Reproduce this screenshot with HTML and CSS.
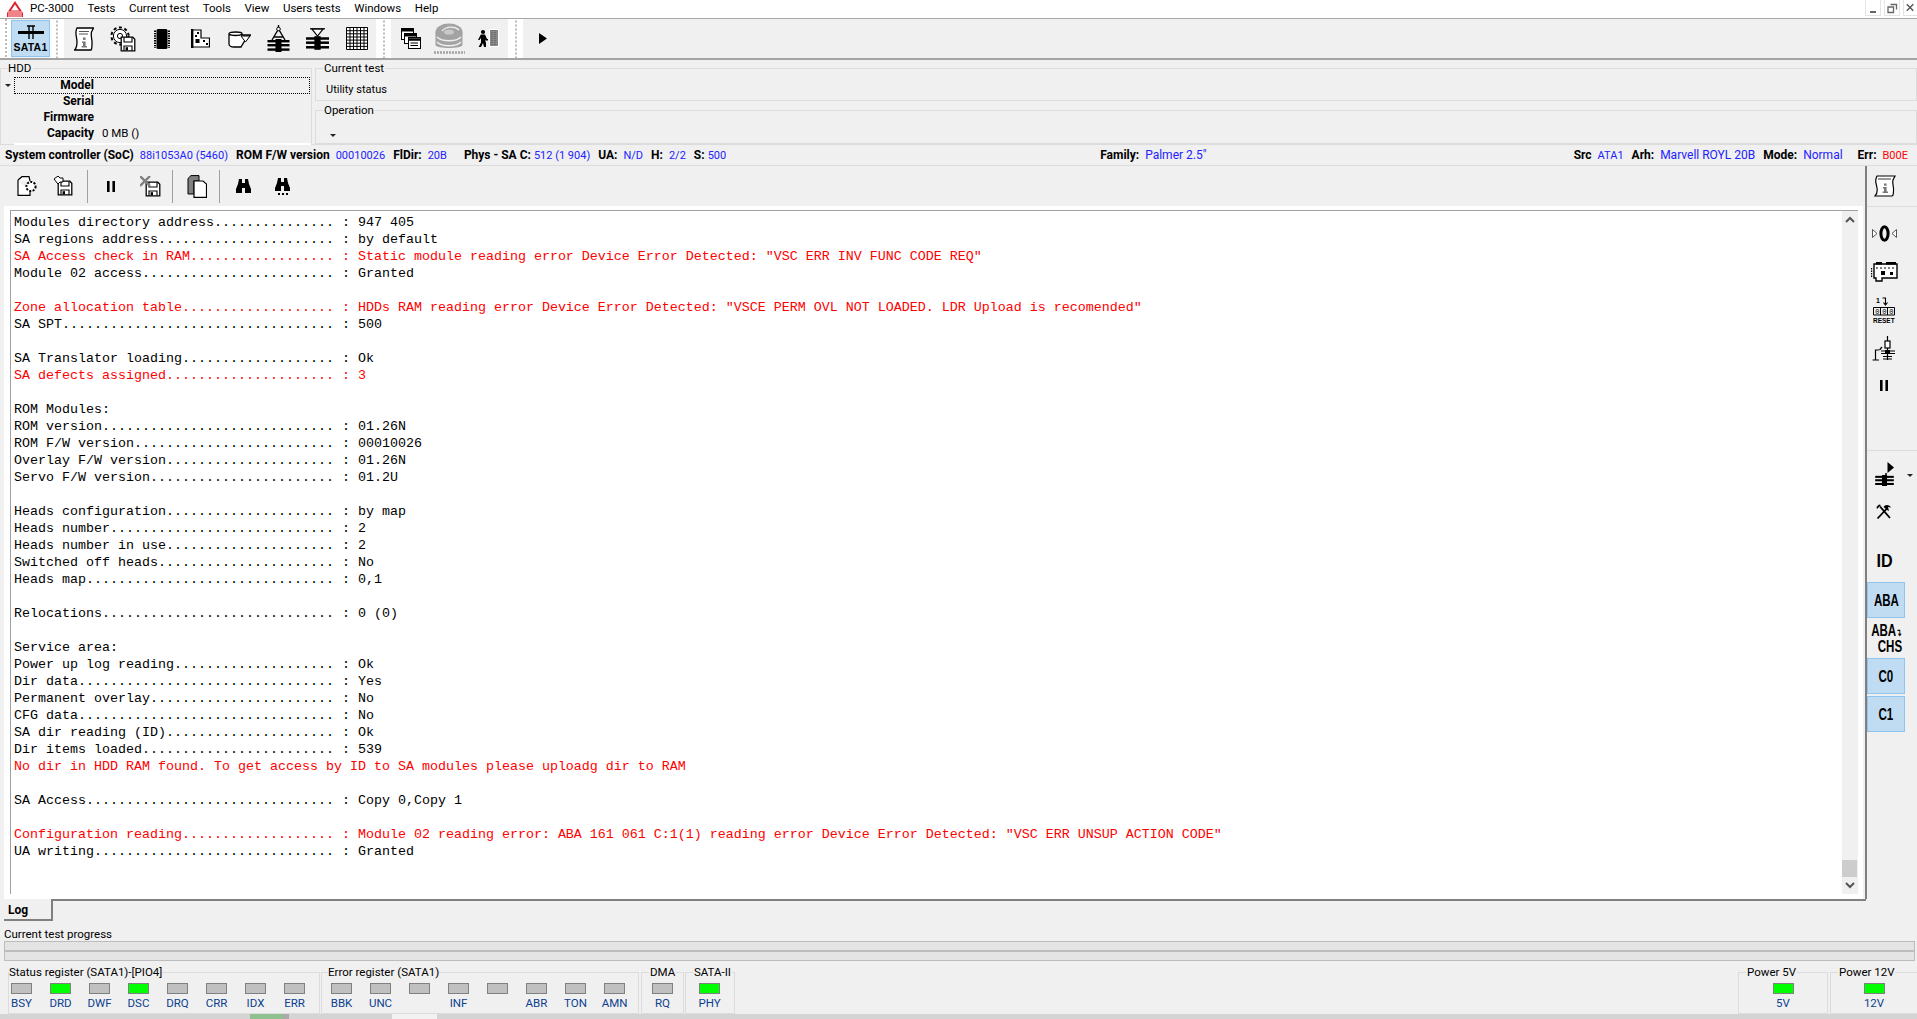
FILE: index.html
```html
<!DOCTYPE html>
<html lang="en">
<head>
<meta charset="utf-8">
<title>PC-3000</title>
<link rel="stylesheet" href="styles.css">
</head>
<body>
<svg class="defs" width="0" height="0" aria-hidden="true"><defs>
<symbol id="floppy" viewBox="0 0 20 20"><path d="M1.500 1.500H16L18.500 4V18.500H1.500Z" fill="#fff" stroke="#000" stroke-width="1.600"/><path d="M5 1.500V7.500H15V1.500M5 18.500V12.500H15V18.500" fill="none" stroke="#000" stroke-width="1.400"/><rect x="7" y="14" width="3" height="4" fill="#000"/></symbol>
<symbol id="bars" viewBox="0 0 22 13"><g fill="#000"><rect x="0" y="1" width="22" height="2.400"/><rect x="0" y="5" width="22" height="2.400"/><rect x="0" y="9.400" width="22" height="2.400"/><rect x="8" y="0" width="6" height="13"/></g></symbol>
</defs></svg>

<header class="menubar">
  <svg class="logo" viewBox="0 0 16 16"><path d="M8 0L16 12V16H0V12Z" fill="#e0202a"/><path d="M8 3.500L12 9.500H4Z" fill="#fff"/><path d="M1 11H15M1 13H15M1 15H15" stroke="#fff" stroke-width=".9"/></svg>
  <span>PC-3000</span><span>Tests</span><span>Current test</span><span>Tools</span><span>View</span><span>Users tests</span><span>Windows</span><span>Help</span>
  <div class="winctl">
    <div class="winbtn"><svg width="14" height="14" viewBox="0 0 14 14"><rect x="4" y="10" width="6" height="2" fill="#666"/></svg></div>
    <div class="winbtn"><svg width="14" height="14" viewBox="0 0 14 14"><path d="M5.500 3.500H11.500V8.500M3 6H8.500V11.500H3Z" fill="none" stroke="#666" stroke-width="1.300"/></svg></div>
    <div class="winbtn closebtn"><svg width="14" height="14" viewBox="0 0 14 14"><path d="M3 3L10 10M10 3L3 10" stroke="#555" stroke-width="1.500"/></svg></div>
  </div>
</header>

<nav class="toolbar">
  <div class="grip grip-first"></div>
  <div class="slot slot-active">
    <svg width="28" height="15" viewBox="0 0 28 15"><path d="M1 7.500H27" stroke="#000" stroke-width="3"/><path d="M12 1V14M16 1V14M10 1H18" stroke="#000" stroke-width="1.400" fill="none"/></svg>
    <span class="satalabel">SATA1</span>
  </div>
  <div class="grip"></div>
  <div class="tbgroup">
    <div class="slot"><svg width="20" height="24" viewBox="0 0 20 24"><path d="M3 1H19.500L17.500 5C16.500 9 18.500 13 18 17C17.700 19 18.500 21 17 23H.6C2.500 21 3 18 3 15C3 11 1.500 8 2 4.500C2.200 3 2.500 2 3 1Z" fill="#fff" stroke="#000" stroke-width="1.300"/><path d="M5 4.500H15M5 7H14" stroke="#555"/><rect x="9" y="10.500" width="2.600" height="2.400" fill="#777"/><path d="M8 14.500H11.600V19H13V20.500H7.600V19H9V16H8Z" fill="#777"/></svg></div>
    <div class="slot"><svg width="26" height="26" viewBox="0 0 26 26"><circle cx="10" cy="10" r="8.600" fill="none" stroke="#000" stroke-width="2" stroke-dasharray="3 2.600"/><circle cx="10" cy="10" r="6.600" fill="#fff" stroke="#000" stroke-width="1"/><circle cx="10" cy="10" r="2.600" fill="none" stroke="#000"/><use href="#floppy" x="10" y="10" width="16" height="16"/></svg></div>
    <div class="slot"><svg width="16" height="20" viewBox="0 0 16 20"><rect x="2.500" y="0" width="11" height="20" rx="1.500" fill="#000"/><path d="M1 1.500V19M15 1.500V19" stroke="#000" stroke-width="2" stroke-dasharray="1.400 1" fill="none"/></svg></div>
    <div class="slot"><svg width="19" height="19" viewBox="0 0 19 19"><path d="M1 1H10V9H18.500V18H1Z" fill="#fff" stroke="#000" stroke-width="1.200"/><rect x="0" y="0" width="2.400" height="19" fill="#000"/><rect x="4.500" y="10" width="4" height="4" fill="#000"/><rect x="6" y="3" width="2" height="2" fill="#000"/><rect x="12" y="11" width="2" height="2" fill="#000"/><rect x="15" y="14" width="2" height="2" fill="#000"/><rect x="4" y="6" width="2" height="2" fill="#000"/></svg></div>
    <div class="slot"><svg width="23" height="18" viewBox="0 0 23 18"><path d="M1 3.500C1 1.500 14 1.500 14 3.500V5H22.500L16 12L13 17H6C3 17 1 16 1 14ZM1 4C3 6 12 6 14 4" fill="#fff" stroke="#000" stroke-width="1.300"/><path d="M13 6H22L17.500 12Z" fill="#fff" stroke="#000"/></svg></div>
    <div class="slot"><svg width="23" height="27" viewBox="0 0 23 27"><path d="M11.500 0V5M11.500 4L5 15M11.500 4L18 15M7 12H16" stroke="#000" stroke-width="1.400" fill="none"/><circle cx="11.500" cy="4" r="1.800" fill="#fff" stroke="#000"/><use href="#bars" x="0" y="14" width="23" height="13"/></svg></div>
    <div class="slot"><svg width="23" height="22" viewBox="0 0 23 22"><path d="M6 1H17L11.500 8Z" fill="#fff" stroke="#000" stroke-width="1.200"/><path d="M4 .8H19" stroke="#000" stroke-width="1.200"/><use href="#bars" x="0" y="8" width="23" height="14"/></svg></div>
    <div class="slot"><svg width="22" height="23" viewBox="0 0 22 23"><path d="M.5 .5H21.500V22.500H.5ZM4 1V22M7.500 1V22M11 1V22M14.500 1V22M18 1V22M1 3.700H21M1 6.800H21M1 10H21M1 13.100H21M1 16.200H21M1 19.400H21" fill="#fff" stroke="#000"/></svg></div>
  </div>
  <div class="grip"></div>
  <div class="tbgroup">
    <div class="slot"><svg width="20" height="21" viewBox="0 0 20 21"><g stroke="#000" fill="#fff"><rect x=".5" y=".5" width="12" height="11"/><rect x="3.500" y="5.500" width="12" height="10"/><rect x="7.500" y="9.500" width="12" height="11"/></g><path d="M1 2.200H12M4 7.200H15M8 11.500H19" stroke="#000" stroke-width="2.400"/><path d="M9.500 15H17M9.500 17.500H17" stroke="#000"/></svg></div>
    <div class="slot"><svg width="31" height="31" viewBox="0 0 31 31"><ellipse cx="15" cy="9" rx="13.500" ry="8.500" fill="#a3a3a3"/><path d="M1.500 9V22C1.500 26 28.500 26 28.500 22V9" fill="#a3a3a3"/><path d="M3 14C8 19 22 19 27 14M3 19C8 24 22 24 27 19M8 8C12 3 21 3 25 7" stroke="#eee" stroke-width="1.400" fill="none"/><ellipse cx="15" cy="9" rx="5" ry="2.600" fill="#c8c8c8"/><path d="M0 29.500H31" stroke="#a3a3a3" stroke-width="2.500" stroke-dasharray="2 1"/></svg></div>
    <div class="slot"><svg width="21" height="19" viewBox="0 0 21 19"><rect x="11" y="0" width="10" height="18" fill="#fff"/><rect x="12" y="1" width="8" height="16" fill="#888"/><path d="M14 1V17M17 1V17" stroke="#555" stroke-dasharray="1 1"/><circle cx="5" cy="3" r="2.100" fill="#000"/><path d="M3 5.500H7L9 10H10V11.500H7.500L6.800 10L8 14V18H6L5 14L3 18H0.600L3 13.500V9L1.500 11H0L2.500 6Z" fill="#000"/></svg></div>
  </div>
  <div class="grip"></div>
  <div class="slot"><svg width="8" height="11" viewBox="0 0 8 11"><path d="M0 0L8 5.500L0 11Z" fill="#000"/></svg></div>
</nav>

<section class="devicearea">
  <div class="group hddgroup">
    <span class="legend">HDD</span>
    <div class="hddrow hddrow-focus"><span class="droptri droptri-model"></span><b class="hddlabel">Model</b></div>
    <div class="hddrow"><b class="hddlabel">Serial</b></div>
    <div class="hddrow"><b class="hddlabel">Firmware</b></div>
    <div class="hddrow"><b class="hddlabel">Capacity</b><span class="hddvalue">0 MB ()</span></div>
    <div class="hddwhite"></div>
  </div>
  <div class="testcol">
    <div class="group testgroup">
      <span class="legend legend-test">Current test</span>
      <div class="utility">Utility status</div>
    </div>
    <div class="group opgroup">
      <span class="legend legend-test">Operation</span>
      <span class="droptri droptri-op"></span>
    </div>
  </div>
</section>

<section class="inforow">
  <b>System controller (SoC)</b><span class="val">88i1053A0 (5460)</span>
  <b class="next">ROM F/W version</b><span class="val">00010026</span>
  <b class="next">FlDir:</b><span class="val">20B</span>
  <b class="next-wide">Phys - SA C:</b><span class="val val-tight">512 (1 904)</span>
  <b class="next">UA:</b><span class="val">N/D</span>
  <b class="next">H:</b><span class="val">2/2</span>
  <b class="next">S:</b><span class="val val-tight">500</span>
  <b class="family">Family:</b><span class="val val-wide">Palmer 2.5"</span>
  <b class="src">Src</b><span class="val">ATA1</span>
  <b class="next">Arh:</b><span class="val val-wide">Marvell ROYL 20B</span>
  <b class="next">Mode:</b><span class="val val-wide">Normal</span>
  <b class="next-err">Err:</b><span class="val val-err">B00E</span>
</section>

<main class="workspace">
  <div class="center">
    <div class="toolbar2">
      <svg class="ml0" width="20" height="20" viewBox="0 0 20 20"><path d="M1 4L5 .7H12L13 5M1 4V19.300H13V16" fill="#fff" stroke="#000" stroke-width="1.200"/><circle cx="14" cy="10.500" r="4.600" fill="#fff" stroke="#000" stroke-width="2" stroke-dasharray="2 1.400"/></svg>
      <svg class="ml16" width="20" height="20" viewBox="0 0 20 20"><use href="#floppy" x="4" y="4" width="16" height="16"/><path d="M1 3L5 0L7 2H10V6H7L5 8Z" fill="#fff" stroke="#000"/></svg>
      <i class="sep ml14"></i>
      <svg class="ml19" width="8" height="11" viewBox="0 0 8 11"><path d="M0 0H2.600V11H0ZM5.400 0H8V11H5.400Z" fill="#000"/></svg>
      <svg class="ml25" width="21" height="21" viewBox="0 0 21 21"><use href="#floppy" x="5" y="5" width="16" height="16"/><path d="M0 0L10 10M10 0L0 10" stroke="#808080" stroke-width="2.400"/></svg>
      <i class="sep ml11"></i>
      <svg class="ml14" width="20" height="23" viewBox="0 0 20 23"><path d="M1 3.500L4 .6H12V6H7V19H1Z" fill="#808080" stroke="#000"/><path d="M7 6H16L19.500 9V22.400H7Z" fill="#fff" stroke="#000" stroke-width="1.200"/></svg>
      <i class="sep ml12"></i>
      <svg class="ml16" width="15" height="14" viewBox="0 0 15 14"><path d="M3 0H6V4H9V0H12L13 5L15 10V14H9V9H6V14H0V10L2 5Z" fill="#000"/></svg>
      <svg class="ml24" width="15" height="17" viewBox="0 0 15 17"><path d="M3 0H6V4H9V0H12L13 5L15 10V13H9V8H6V13H0V10L2 5Z" fill="#000"/><path d="M3 16H5M7 16H9M11 16H13" stroke="#000" stroke-width="2"/></svg>
    </div>
    <div class="logouter">
      <div class="logbox">
        <div class="logtext">
<div class="line">Modules directory address............... : 947 405</div>
<div class="line">SA regions address...................... : by default</div>
<div class="line err">SA Access check in RAM.................. : Static module reading error Device Error Detected: "VSC ERR INV FUNC CODE REQ"</div>
<div class="line">Module 02 access........................ : Granted</div>
<div class="line"> </div>
<div class="line err">Zone allocation table................... : HDDs RAM reading error Device Error Detected: "VSCE PERM OVL NOT LOADED. LDR Upload is recomended"</div>
<div class="line">SA SPT.................................. : 500</div>
<div class="line"> </div>
<div class="line">SA Translator loading................... : Ok</div>
<div class="line err">SA defects assigned..................... : 3</div>
<div class="line"> </div>
<div class="line">ROM Modules:</div>
<div class="line">ROM version............................. : 01.26N</div>
<div class="line">ROM F/W version......................... : 00010026</div>
<div class="line">Overlay F/W version..................... : 01.26N</div>
<div class="line">Servo F/W version....................... : 01.2U</div>
<div class="line"> </div>
<div class="line">Heads configuration..................... : by map</div>
<div class="line">Heads number............................ : 2</div>
<div class="line">Heads number in use..................... : 2</div>
<div class="line">Switched off heads...................... : No</div>
<div class="line">Heads map............................... : 0,1</div>
<div class="line"> </div>
<div class="line">Relocations............................. : 0 (0)</div>
<div class="line"> </div>
<div class="line">Service area:</div>
<div class="line">Power up log reading.................... : Ok</div>
<div class="line">Dir data................................ : Yes</div>
<div class="line">Permanent overlay....................... : No</div>
<div class="line">CFG data................................ : No</div>
<div class="line">SA dir reading (ID)..................... : Ok</div>
<div class="line">Dir items loaded........................ : 539</div>
<div class="line err">No dir in HDD RAM found. To get access by ID to SA modules please uploadg dir to RAM</div>
<div class="line"> </div>
<div class="line">SA Access............................... : Copy 0,Copy 1</div>
<div class="line"> </div>
<div class="line err">Configuration reading................... : Module 02 reading error: ABA 161 061 C:1(1) reading error Device Error Detected: "VSC ERR UNSUP ACTION CODE"</div>
<div class="line">UA writing.............................. : Granted</div>
        </div>
        <div class="scrollbar">
          <svg class="scrollarrow" width="16" height="18" viewBox="0 0 16 18"><path d="M4 11L8 7L12 11" fill="none" stroke="#555" stroke-width="2"/></svg>
          <div class="thumb"></div>
          <svg class="scrollarrow" width="16" height="17" viewBox="0 0 16 17"><path d="M4 6L8 10L12 6" fill="none" stroke="#555" stroke-width="2"/></svg>
        </div>
      </div>
    </div>
  </div>
  <aside class="sidebar">
    <div class="sideslot sideslot-top"><svg width="22" height="22" viewBox="0 0 22 22"><path d="M3 1H21L19 5C18 8 20 12 19.500 16C19 19 20 20 18 21H1C3 19 3.500 16 3 13C2.500 9 1 7 2 4C2.200 3 2.500 2 3 1Z" fill="#fff" stroke="#000" stroke-width="1.200"/><path d="M4.500 4H17" stroke="#333" stroke-width="2" stroke-dasharray="1 1"/><rect x="10" y="8.500" width="2.600" height="2.200" fill="#777"/><path d="M9 12H12.600V16.500H14V18H8.600V16.500H10V13.500H9Z" fill="#777"/></svg></div>
    <div class="sideslot sideslot-first"><svg width="25" height="17" viewBox="0 0 25 17"><path d="M.5 4.500L5 8.500L.5 12.500ZM24.500 4.500L20 8.500L24.500 12.500Z" fill="#fff" stroke="#555"/><ellipse cx="12.500" cy="8.500" rx="3.600" ry="6.800" fill="none" stroke="#000" stroke-width="3"/></svg></div>
    <div class="sideslot"><svg width="27" height="20" viewBox="0 0 27 20"><path d="M3 2H26V16H11V19H5V16H3Z" fill="#fff" stroke="#000" stroke-width="1.400"/><path d="M5 1H11M15 1H25" stroke="#000" stroke-width="3"/><path d="M5 6H24" stroke="#000" stroke-dasharray="2 2"/><path d="M0 6V15" stroke="#000" stroke-width="2.400" stroke-dasharray="1.500 1"/><rect x="10" y="9" width="4" height="4"/><rect x="19" y="10" width="3" height="3"/></svg></div>
    <div class="sideslot"><svg width="24" height="27" viewBox="0 0 24 27"><text x="4" y="6" class="svgmini">1</text><path d="M10.500 1H13.500V7M11.500 5.500L13.500 8L15.500 5.500" fill="none" stroke="#000" stroke-width="1.100"/><path d="M1.500 10.500H22.500V18H1.500ZM8.500 10.500V18M15.500 10.500V18" fill="none" stroke="#000"/><text x="3.200" y="16.800" class="svgzero">0</text><text x="10.200" y="16.800" class="svgzero">0</text><text x="17.200" y="16.800" class="svgzero">0</text><text x="1" y="26" class="svgreset">RESET</text></svg></div>
    <div class="sideslot"><svg width="24" height="25" viewBox="0 0 24 25"><path d="M.5 24H7M3.500 24V14H7M7.500 14L10 11" fill="none" stroke="#000" stroke-width="1.200"/><path d="M15.500 0V5M15.500 12V24" stroke="#000" stroke-width="1.200"/><rect x="13" y="5" width="5" height="7" fill="#fff" stroke="#000" stroke-width="1.200"/><path d="M9 15H23M9 17.500H23" stroke="#000"/><rect x="13" y="14" width="5" height="4" fill="#000"/><path d="M11 23H20M11 20.500H20" stroke="#000" stroke-width="1.200"/></svg></div>
    <div class="sideslot sideslot-pause"><svg width="8" height="11" viewBox="0 0 8 11"><path d="M0 0H2.600V11H0ZM5.400 0H8V11H5.400Z" fill="#000"/></svg></div>
    <div class="sidesep"></div>
    <div class="sideslot"><svg width="23" height="24" viewBox="0 0 23 24"><path d="M14.500 0L21 5.500L14.500 11Z" fill="#000"/><path d="M13 11V14" stroke="#000" stroke-width="1.500"/><use href="#bars" x="0" y="13" width="23" height="11"/></svg><span class="droptri droptri-side"></span></div>
    <div class="sideslot"><svg width="16" height="16" viewBox="0 0 16 16"><path d="M1.500 14.500L11 4.500M4 2.500L14 14" stroke="#000" stroke-width="1.800" fill="none"/><path d="M1 5L5 1L3 .5L.5 3ZM7.500 3C9 .5 12.500 0 15 3.500L12 3L13 7L11 6Z" fill="#000"/></svg></div>
    <div class="sideslot sideslot-id"><span class="bigid">ID</span></div>
    <div class="sidebtn sidebtn-active"><span class="condensed">ABA</span></div>
    <div class="sidebtn sidebtn-chs"><span class="condensed chs1">ABA<span class="chsarrow">&#8628;</span></span><span class="condensed chs2">CHS</span></div>
    <div class="sidebtn sidebtn-active"><span class="condensed">C0</span></div>
    <div class="sidebtn sidebtn-active sidebtn-c1"><span class="condensed">C1</span></div>
  </aside>
</main>

<div class="tabrow">
  <div class="tab">Log</div>
  <div class="tabline"></div>
</div>

<section class="progress">
  <div class="progresslabel">Current test progress</div>
  <div class="progressbar"></div>
  <div class="progressbar progressbar-second"></div>
</section>

<section class="registers">
  <div class="group reggroup reg-status">
    <span class="legend">Status register (SATA1)-[PIO4]</span>
    <div class="leds">
      <div class="cell"><i class="led"></i><span>BSY</span></div>
      <div class="cell"><i class="led on"></i><span>DRD</span></div>
      <div class="cell"><i class="led"></i><span>DWF</span></div>
      <div class="cell"><i class="led on"></i><span>DSC</span></div>
      <div class="cell"><i class="led"></i><span>DRQ</span></div>
      <div class="cell"><i class="led"></i><span>CRR</span></div>
      <div class="cell"><i class="led"></i><span>IDX</span></div>
      <div class="cell"><i class="led"></i><span>ERR</span></div>
    </div>
  </div>
  <div class="group reggroup reg-error">
    <span class="legend legend-error">Error register (SATA1)</span>
    <div class="leds">
      <div class="cell"><i class="led"></i><span>BBK</span></div>
      <div class="cell"><i class="led"></i><span>UNC</span></div>
      <div class="cell"><i class="led"></i><span>&nbsp;</span></div>
      <div class="cell"><i class="led"></i><span>INF</span></div>
      <div class="cell"><i class="led"></i><span>&nbsp;</span></div>
      <div class="cell"><i class="led"></i><span>ABR</span></div>
      <div class="cell"><i class="led"></i><span>TON</span></div>
      <div class="cell"><i class="led"></i><span>AMN</span></div>
    </div>
  </div>
  <div class="group reggroup reg-dma">
    <span class="legend legend-small">DMA</span>
    <div class="leds"><div class="cell"><i class="led"></i><span>RQ</span></div></div>
  </div>
  <div class="group reggroup reg-sata">
    <span class="legend legend-small">SATA-II</span>
    <div class="leds"><div class="cell"><i class="led on"></i><span>PHY</span></div></div>
  </div>
  <div class="group reggroup reg-p5">
    <span class="legend legend-small">Power 5V</span>
    <div class="leds leds-center"><div class="cell"><i class="led on"></i><span>5V</span></div></div>
  </div>
  <div class="group reggroup reg-p12">
    <span class="legend legend-small">Power 12V</span>
    <div class="leds leds-center"><div class="cell"><i class="led on"></i><span>12V</span></div></div>
  </div>
</section>

<footer class="strip">
  <i class="strip-green"></i><i class="strip-dark"></i><i class="strip-light"></i>
</footer>
</body>
</html>
```
FILE: styles.css
```css
* { box-sizing: border-box; }
html, body { margin: 0; height: 1019px; overflow: hidden; }
body {
  background: #f0f0f0;
  color: #000;
  font: 11.5px/15px Roboto, "Liberation Sans", sans-serif;
}
.defs { position: absolute; }
i { display: block; font-style: normal; }

/* menu */
.menubar {
  height: 19px;
  background: #fff;
  border-bottom: 1px solid #a8a8a8;
  display: flex;
  align-items: center;
  gap: 13.6px;
  padding: 0 0 2px 7px;
}
.logo { width: 16px; height: 16px; margin: 2px -6.600px 0 0; }
.winctl { margin-left: auto; display: flex; gap: 3px; align-self: flex-start; }
.winbtn {
  width: 16px; height: 16px;
  border: 1px solid #e4e4e4;
  border-top: 0;
  display: flex; align-items: center; justify-content: center;
}
.closebtn { width: 14px; border-right: 0; }

/* main toolbar */
.toolbar {
  height: 41px;
  display: flex;
  align-items: stretch;
  border-bottom: 2px solid #a4a4a4;
}
.grip {
  width: 15px;
  background: #fff linear-gradient(#bbb 50%, transparent 50%) center / 2px 4px repeat-y;
}
.grip-first { width: 11px; background-position: 5px 0; }
.slot-active + .grip { width: 14px; }
.tbgroup { display: flex; }
.slot {
  width: 39px;
  display: flex;
  flex-direction: column;
  align-items: center;
  justify-content: center;
}
.slot-active { background: #bfdcf3; border: 1px solid #8fc4ee; margin: 1px 0; }
.satalabel { font: bold 10.5px/12px "Liberation Sans", sans-serif; margin-top: 1px; letter-spacing: .2px; }

/* groups */
.group { border: 1px solid #dcdcdc; }
.legend { display: table; background: #f0f0f0; margin-top: -8px; line-height: 15px; }
.devicearea {
  height: 84px;
  padding-top: 8px;
  display: flex;
  gap: 3px;
}
.hddgroup {
  width: 312px;
  border-width: 1px 1px 0 1px;
  position: relative;
}
.hddgroup .legend { margin-left: 7px; padding-right: 2px; }
.hddrow { height: 16px; display: flex; align-items: center; }
.hddrow-focus { height: 15px; margin: 2px 1px 0 14px; outline: 1px dotted #000; width: 294px; }
.hddrow-focus .hddlabel { width: 79px; }
.hddlabel { width: 93px; text-align: right; font-size: 12px; }
.hddvalue { margin-left: 8px; }
.hddwhite { height: 2px; background: #fff; margin: 2px 0 0 13px; }
.droptri { display: block; width: 0; height: 0; border: 3px solid transparent; border-top: 3px solid #222; border-bottom: 0; }
.droptri-model { position: absolute; left: 4px; top: 15px; }
.droptri-op { margin: 16px 0 0 14px; }
.droptri-side { position: absolute; right: -10px; top: 19px; }
.testcol { flex: 1; display: flex; flex-direction: column; gap: 9px; }
.testgroup { height: 33px; }
.opgroup { flex: 1; }
.legend-test { margin-left: 7px; padding: 0 1px; }
.utility { margin: 6px 0 0 10px; font-size: 11px; }

/* info row */
.inforow {
  height: 21px;
  border-top: 1px solid #dcdcdc;
  display: flex;
  align-items: center;
  padding-left: 5px;
  white-space: nowrap;
}
.inforow b { font-weight: bold; font-size: 12px; }
.val { color: #2222ff; margin-left: 6px; font-size: 11px; }
.inforow .val-tight { margin-left: 3px; }
.inforow .val-wide { font-size: 12px; }
.val-err { color: #ff0000; }
.next { margin-left: 8px; }
.next-wide { margin-left: 17px; }
.inforow .next-err { margin-left: 15px; }
.inforow .family { margin-left: 374px; }
.inforow .src { margin-left: auto; }
.inforow .val-err { margin-right: 9px; }

/* workspace */
.workspace { height: 734px; display: flex; border-top: 1px solid #dcdcdc; }
.center { width: 1865px; display: flex; flex-direction: column; }
.toolbar2 { height: 40px; display: flex; align-items: center; padding-left: 17px; flex: none; }
.sep { width: 1px; height: 33px; background: #a0a0a0; }
.ml0 { margin-left: 0; }
.ml11 { margin-left: 11px; }
.ml12 { margin-left: 12px; }
.ml14 { margin-left: 14px; }
.ml16 { margin-left: 16px; }
.ml19 { margin-left: 19px; }
.ml24 { margin-left: 24px; }
.ml25 { margin-left: 25px; }
.logouter {
  flex: 1;
  min-height: 0;
  margin-left: 4px;
  margin-right: 2px;
  background: #fff;
  padding: 4px 5px 5px 6px;
}
.logbox {
  height: 100%;
  border-top: 1px solid #a0a0a0;
  border-left: 1px solid #a0a0a0;
  display: flex;
}
.logtext {
  flex: 1;
  padding: 3px 0 0 3px;
  font: 13.33px/17px "Liberation Mono", "Courier New", monospace;
  overflow: hidden;
}
.line { height: 17px; white-space: pre; }
.err { color: #ff0000; }
.scrollbar { width: 16px; background: #f0f0f0; display: flex; flex-direction: column; }
.scrollarrow { flex: none; }
.thumb { height: 17px; margin-top: auto; margin-right: 1px; background: #cdcdcd; }

/* sidebar */
.sidebar {
  width: 52px;
  border-left: 2px solid #808080;
  display: flex;
  flex-direction: column;
  padding-right: 12px;
}
.sideslot {
  height: 38.5px;
  display: flex;
  align-items: center;
  justify-content: center;
  flex: none;
  position: relative;
  left: -2px;
}
.sideslot-top { height: 41px; border-bottom: 1px solid #dcdcdc; margin-right: -14px; padding-right: 14px; left: 0; }
.sideslot-top svg { position: relative; left: -1px; }
.sideslot-first { margin-top: 7px; }
.sideslot-pause { padding-bottom: 3px; }
.sidesep { height: 1px; background: #dcdcdc; margin: 43px -12px 4px 0; flex: none; }
.sideslot-id { margin-top: 10px; }
.bigid { font: bold 19px/20px "Liberation Sans", sans-serif; transform: scaleX(.85); }
.sidebtn {
  height: 36px;
  flex: none;
  display: flex;
  flex-direction: column;
  align-items: center;
  justify-content: center;
  margin-top: 2px;
}
.sidebtn-active { background: #bfdcf3; border: 1px solid #8fc4ee; }
.sideslot-id + .sidebtn { margin-top: 2px; }
.sidebtn-chs + .sidebtn { margin-top: 0; }
.sidebtn-chs { height: 38px; margin-top: 2px; align-items: flex-start; }
.condensed {
  font: bold 17px/15px "Liberation Sans", sans-serif;
  display: block;
  transform: scaleX(.68);
  white-space: nowrap;
}
.chs1 { margin-left: -3px; line-height: 14px; }
.chs2 { margin-left: 5px; line-height: 14px; }
.chsarrow { font-size: 10px; }
.svgmini { font: bold 7px "Liberation Sans", sans-serif; }
.svgzero { font: 7px "Liberation Mono", monospace; }
.svgreset { font: bold 6.500px "Liberation Sans", sans-serif; }

/* tab + progress */
.tabrow { height: 22px; display: flex; }
.tab {
  width: 49px;
  margin-left: 4px;
  padding: 4px 0 0 4px;
  font-weight: bold;
  font-size: 12px;
  border-right: 2px solid #808080;
  border-bottom: 2px solid #808080;
  background: #f0f0f0;
}
.tabline { width: 1813px; height: 2px; background: #808080; }
.progress { height: 40px; padding: 5px 2px 0 4px; }
.progresslabel { height: 14px; line-height: 14px; margin-top: 1px; }
.progressbar { height: 11px; background: #e4e4e4; border: 1px solid #bcbcbc; border-bottom-width: 2px; }
.progressbar-second { height: 9px; border-top: 0; border-bottom-width: 1px; }

/* registers */
.registers { height: 53px; display: flex; padding-left: 8px; padding-top: 11px; }
.reggroup { height: 42px; flex: none; margin-right: 1px; }
.reg-status { width: 312px; }
.reg-error { width: 318px; margin-right: 2px; }
.reg-dma { width: 43px; }
.reg-sata { width: 50px; }
.reg-p5 { width: 90px; margin-left: auto; margin-right: 2px; }
.reg-p12 { width: 87px; margin-right: 0; border-right: 0; }
.legend-error { margin-left: 6px; }
.legend-small { margin-left: 7px; padding: 0 1px; }
.leds { display: flex; gap: 14px; padding: 3px 0 0 0; }
.reg-error .leds { padding-left: 7px; }
.reg-dma .leds { padding-left: 8px; }
.reg-sata .leds { padding-left: 11px; }
.leds-center { justify-content: center; }
.cell {
  width: 25px;
  display: flex;
  flex-direction: column;
  align-items: center;
  white-space: nowrap;
  color: #0b3f8f;
  line-height: 14px;
}
.cell span { margin-top: 2px; }
.led { width: 21px; height: 11px; background: #c0c0c0; border: 1px solid #808080; }
.led.on { background: #00ff00; }

/* bottom strip */
.strip { height: 6px; background: #d4d4d4; display: flex; }
.strip-green { width: 33px; margin-left: 250px; background: #8fc08f; }
.strip-dark { width: 6px; background: #aaa; }
.strip-light { width: 45px; margin-left: 103px; background: #f2f2f2; }
```
